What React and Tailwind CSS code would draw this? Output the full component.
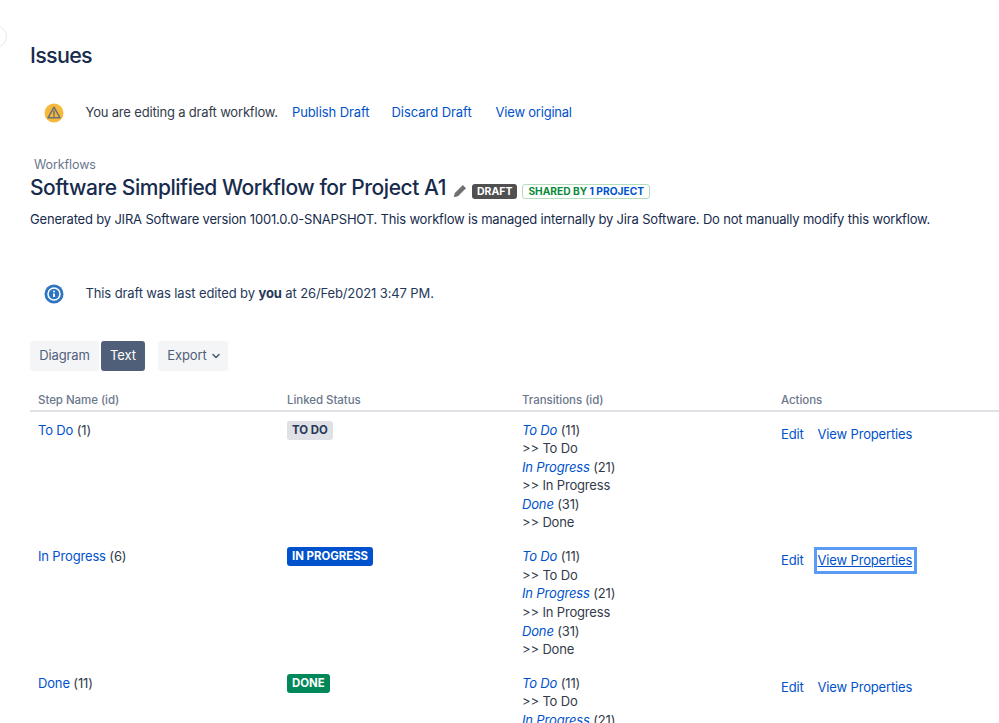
import React from "react";

function Warn() {
  return (
    <svg width="20" height="20" viewBox="0 0 20 20" className="block">
      <circle cx="10" cy="10" r="9.5" fill="#f6b93b" />
      <path d="M10 4.2 L16 14.8 H4 Z" fill="none" stroke="#6b6f76" strokeWidth="1.5" strokeLinejoin="round" />
      <path d="M10 8 V11.4" stroke="#6b6f76" strokeWidth="1.5" strokeLinecap="round" />
      <circle cx="10" cy="13.1" r="0.9" fill="#6b6f76" />
    </svg>
  );
}

function Info() {
  return (
    <svg width="20" height="20" viewBox="0 0 20 20" className="block">
      <circle cx="10" cy="10" r="9.5" fill="#2f74c0" />
      <circle cx="10" cy="10" r="6" fill="none" stroke="#ffffff" strokeWidth="1.5" />
      <circle cx="10" cy="7.4" r="1" fill="#ffffff" />
      <path d="M10 9.4 V13" stroke="#ffffff" strokeWidth="1.8" />
    </svg>
  );
}

function Pencil() {
  return (
    <svg width="14" height="14" viewBox="0 0 14 14" className="block">
      <path d="M0.8 13.2 L1.8 9 L9.8 1 L13 4.2 L5 12.2 Z" fill="#707070" />
    </svg>
  );
}

function Chevron() {
  return (
    <svg width="10" height="10" viewBox="0 0 10 10" className="block">
      <path d="M2 3.5 L5 6.5 L8 3.5" fill="none" stroke="#505f79" strokeWidth="1.6" strokeLinecap="round" strokeLinejoin="round" />
    </svg>
  );
}

function Transitions() {
  const items = [
    ["To Do", "(11)"],
    ["In Progress", "(21)"],
    ["Done", "(31)"],
  ];
  return (
    <div className="leading-[18.6px] text-[#333b4a]">
      {items.map(([n, id]) => (
        <React.Fragment key={n}>
          <div>
            <span className="italic text-[#0052cc]">{n}</span> {id}
          </div>
          <div>&gt;&gt; {n}</div>
        </React.Fragment>
      ))}
    </div>
  );
}

function Row({ name, id, badge, badgeClass, focused }) {
  return (
    <div className="grid grid-cols-[249px_235px_259px_226px] pt-[8.5px] h-[126.7px] text-[13px] tracking-[-0.16px] leading-[18.6px]">
      <div className="pl-2 text-[#333b4a]">
        <span className="text-[#0052cc]">{name}</span> ({id})
      </div>
      <div className="pl-2">
        <span className={`block w-fit rounded-[3px] px-[5px] h-[19px] text-[11.4px] font-bold leading-[18px] tracking-[0px] ${badgeClass}`}>
          {badge}
        </span>
      </div>
      <div className="pl-2">
        <Transitions />
      </div>
      <div className="pl-2 pt-1 flex items-start gap-[14px] text-[#0052cc]">
        <span>Edit</span>
        {focused ? (
          <span className="underline px-[1px] -mx-[1px] pr-[2px] -mr-[2px] py-[1px] -my-[1px] outline-[3px] outline-[#5a9bf6]">View Properties</span>
        ) : (
          <span>View Properties</span>
        )}
      </div>
    </div>
  );
}

export default function App() {
  return (
    <div className="relative w-[999px] h-[723px] overflow-hidden bg-white pl-[30px] text-[#172b4d] [font-family:Inter,'Noto_Sans',sans-serif]">
      <div className="absolute -left-[16px] top-[25px] w-[23px] h-[23px] rounded-full bg-white border border-[#e6e8ec]" />

      <h1 className="pt-[42px] text-[21.5px] font-medium leading-[26px] tracking-[-0.7px] text-[#172b4d]">Issues</h1>

      <div className="mt-[33px] flex items-center h-[24px] text-[13px] tracking-[-0.18px] text-[#333b4a]">
        <div className="ml-[14px] w-[20px]"><Warn /></div>
        <span className="ml-[21.5px]">You are editing a draft workflow.</span>
        <span className="ml-[14px] tracking-[-0.08px] text-[#0052cc]">Publish Draft</span>
        <span className="ml-[22px] tracking-[-0.05px] text-[#0052cc]">Discard Draft</span>
        <span className="ml-[24px] tracking-[-0.22px] text-[#0052cc]">View original</span>
      </div>

      <div className="mt-[33px] pl-1 text-[12.5px] tracking-[-0.1px] leading-[14px] text-[#6b778c]">Workflows</div>
      <div className="mt-[3px] flex items-center h-[26px]">
        <span className="text-[21px] font-medium leading-[26px] tracking-[-0.46px] text-[#172b4d]">Software Simplified Workflow for Project A1</span>
        <span className="ml-[7px] mt-[6px]"><Pencil /></span>
        <span className="ml-[5px] mt-[6px] rounded-[3px] bg-[#505050] px-[5px] h-[15px] text-[10.5px] font-bold leading-[15px] text-white">DRAFT</span>
        <span className="ml-[5px] mt-[6px] rounded-[3px] border border-[#b5dcbc] px-[5px] h-[15px] text-[10.2px] font-bold leading-[13px] whitespace-pre">
          <span className="text-[#0b8a3a]">SHARED BY </span>
          <span className="text-[#0052cc]">1 PROJECT</span>
        </span>
      </div>
      <p className="mt-[9px] text-[13px] tracking-[-0.18px] leading-[18px] text-[#172b4d]">
        Generated by JIRA Software version 1001.0.0-SNAPSHOT. This workflow is managed internally by Jira Software. Do not manually modify this workflow.
      </p>

      <div className="mt-[54px] flex items-center h-[24px] text-[13px] tracking-[-0.12px] text-[#253858]">
        <div className="ml-[14px] w-[20px]"><Info /></div>
        <span className="ml-[21.5px]">
          This draft was last edited by <b className="font-bold">you</b> at 26/Feb/2021 3:47 PM.
        </span>
      </div>

      <div className="mt-[35px] flex items-center text-[13px] tracking-[-0.1px]">
        <span className="flex items-center h-[30px] w-[69px] justify-center rounded-[3px] bg-[#f4f5f7] text-[#505f79]">Diagram</span>
        <span className="ml-[2px] flex items-center h-[30px] w-[44px] justify-center rounded-[3px] bg-[#505f79] text-white">Text</span>
        <span className="ml-[13px] flex items-center gap-[4px] h-[30px] w-[70px] pl-[2px] justify-center rounded-[3px] bg-[#f4f5f7] text-[#505f79]">
          Export <Chevron />
        </span>
      </div>

      <div className="mt-[14px] grid grid-cols-[249px_235px_259px_226px] pt-[6px] h-[27px] border-b-2 border-[#dfe1e6] text-[11.5px] font-medium leading-[18px] tracking-[-0.05px] text-[#6b778c]">
        <div className="pl-2">Step Name (id)</div>
        <div className="pl-2">Linked Status</div>
        <div className="pl-2">Transitions (id)</div>
        <div className="pl-2">Actions</div>
      </div>

      <Row name="To Do" id="1" badge="TO DO" badgeClass="bg-[#dfe1e6] text-[#253858]" />
      <Row name="In Progress" id="6" badge="IN PROGRESS" badgeClass="bg-[#0052cc] text-white" focused />
      <Row name="Done" id="11" badge="DONE" badgeClass="bg-[#00875a] text-white" />
    </div>
  );
}
